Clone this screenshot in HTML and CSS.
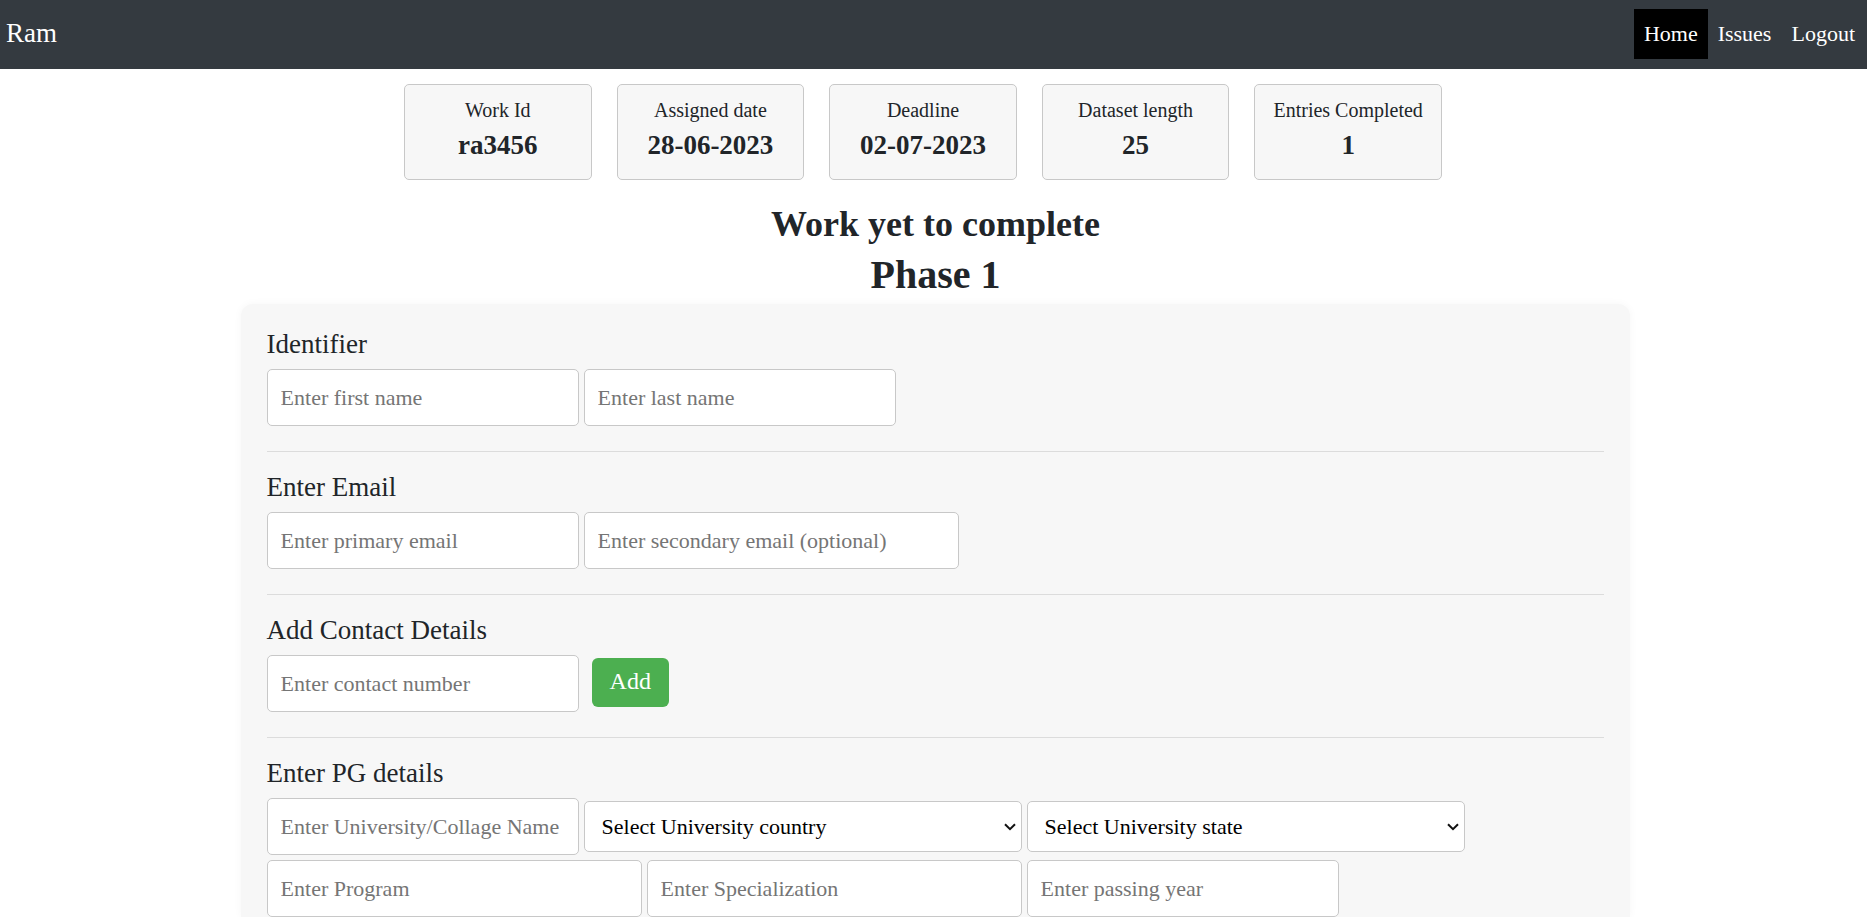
FILE: index.html
```html
<!DOCTYPE html>
<html lang="en">
<head>
<meta charset="utf-8">
<title>Work entry</title>
<link rel="stylesheet" href="styles.css">
</head>
<body>
<header class="navbar">
  <span class="brand">Ram</span>
  <nav class="nav">
    <a class="nav-link active" href="#">Home</a>
    <a class="nav-link" href="#">Issues</a>
    <a class="nav-link" href="#">Logout</a>
  </nav>
</header>
<main class="content">
  <section class="cards">
    <div class="card"><p class="card-label">Work Id</p><p class="card-value">ra3456</p></div>
    <div class="card"><p class="card-label">Assigned date</p><p class="card-value">28-06-2023</p></div>
    <div class="card"><p class="card-label">Deadline</p><p class="card-value">02-07-2023</p></div>
    <div class="card"><p class="card-label">Dataset length</p><p class="card-value">25</p></div>
    <div class="card"><p class="card-label">Entries Completed</p><p class="card-value">1</p></div>
  </section>
  <h2 class="status">Work yet to complete</h2>
  <h1 class="phase">Phase 1</h1>
  <form class="panel">
    <section class="group">
      <h3 class="group-title">Identifier</h3>
      <div class="row">
        <input class="field" type="text" placeholder="Enter first name" aria-label="First name">
        <input class="field" type="text" placeholder="Enter last name" aria-label="Last name">
      </div>
    </section>
    <section class="group">
      <h3 class="group-title">Enter Email</h3>
      <div class="row">
        <input class="field" type="email" placeholder="Enter primary email" aria-label="Primary email">
        <input class="field wide" type="email" placeholder="Enter secondary email (optional)" aria-label="Secondary email">
      </div>
    </section>
    <section class="group">
      <h3 class="group-title">Add Contact Details</h3>
      <div class="row">
        <input class="field" type="text" placeholder="Enter contact number" aria-label="Contact number">
        <button class="add" type="button">Add</button>
      </div>
    </section>
    <section class="group">
      <h3 class="group-title">Enter PG details</h3>
      <div class="row">
        <input class="field" type="text" placeholder="Enter University/Collage Name" aria-label="University or collage name">
        <div class="choice-box">
          <select class="choice" aria-label="University country"><option>Select University country</option></select>
          <svg class="chevron" width="12" height="8" viewBox="0 0 12 8" aria-hidden="true"><path d="M1 1.2 6 6.2 11 1.2" fill="none" stroke="#111" stroke-width="2"/></svg>
        </div>
        <div class="choice-box">
          <select class="choice" aria-label="University state"><option>Select University state</option></select>
          <svg class="chevron" width="12" height="8" viewBox="0 0 12 8" aria-hidden="true"><path d="M1 1.2 6 6.2 11 1.2" fill="none" stroke="#111" stroke-width="2"/></svg>
        </div>
      </div>
      <div class="row">
        <input class="field wide" type="text" placeholder="Enter Program" aria-label="Program">
        <input class="field wide" type="text" placeholder="Enter Specialization" aria-label="Specialization">
        <input class="field" type="text" placeholder="Enter passing year" aria-label="Passing year">
      </div>
    </section>
  </form>
</main>
</body>
</html>
```
FILE: styles.css
```css
* { box-sizing: border-box; }
body, h1, h2, h3, p { margin: 0; }
body, input, select, button { font-family: "Liberation Serif", serif; }
body { background: #fff; color: #212529; }

.navbar {
  display: flex;
  align-items: center;
  justify-content: space-between;
  padding: 9px 2px 10px 6px;
  background: #343a40;
  color: #fff;
}
.brand { font-size: 27px; line-height: 48px; padding-bottom: 2px; }
.nav { display: flex; }
.nav-link {
  padding: 10px;
  font-size: 22px;
  line-height: 30px;
  color: #fff;
  text-decoration: none;
}
.nav-link.active { background: #000; }

.content { padding: 15px 0 0 4px; }
.cards {
  display: flex;
  gap: 25px;
  max-width: 1063px;
  margin: 0 auto;
  padding-right: 25px;
}
.card {
  flex: 1;
  padding: 10px 0 14px;
  border: 1px solid #c8c8c8;
  border-radius: 5px;
  background: #f7f7f7;
  text-align: center;
  white-space: nowrap;
}
.card-label { font-size: 20px; line-height: 30px; }
.card-value { font-size: 27px; line-height: 40px; font-weight: bold; }

.status, .phase { text-align: center; font-weight: bold; }
.status { margin-top: 22px; font-size: 36px; line-height: 44px; }
.phase { font-size: 40px; line-height: 58px; }

.panel {
  width: 74.6%;
  margin: 0 auto;
  padding: 25px 26px 0;
  border-radius: 12px 12px 0 0;
  background: #f7f7f7;
  box-shadow: 0 0 8px rgba(0, 0, 0, 0.04);
}
.group + .group {
  margin-top: 25px;
  padding-top: 20px;
  border-top: 1px solid #dcdcdc;
}
.group-title { margin-bottom: 10px; font-size: 27px; line-height: 30px; font-weight: normal; }
.row { display: flex; align-items: center; gap: 5px; }
.row + .row { margin-top: 5px; }
.field, .choice {
  border: 1px solid #c8c8c8;
  border-radius: 5px;
  background: #fff;
  font-size: 22px;
}
.field { width: 312px; height: 57px; padding: 0 13px; }
.field.wide { width: 375px; }
.field::placeholder { color: #757575; }
.choice-box { position: relative; width: 438px; }
.choice {
  display: block;
  width: 100%;
  height: 51px;
  padding: 0 17px;
  color: #000;
  appearance: none;
}
.chevron {
  position: absolute;
  top: 22px;
  right: 6px;
  pointer-events: none;
}
.add {
  margin: 0 0 3px 8px;
  padding: 8px 18px 11px;
  border: 0;
  border-radius: 6px;
  background: #4caf50;
  color: #fff;
  font-size: 24px;
  line-height: 30px;
}
```
